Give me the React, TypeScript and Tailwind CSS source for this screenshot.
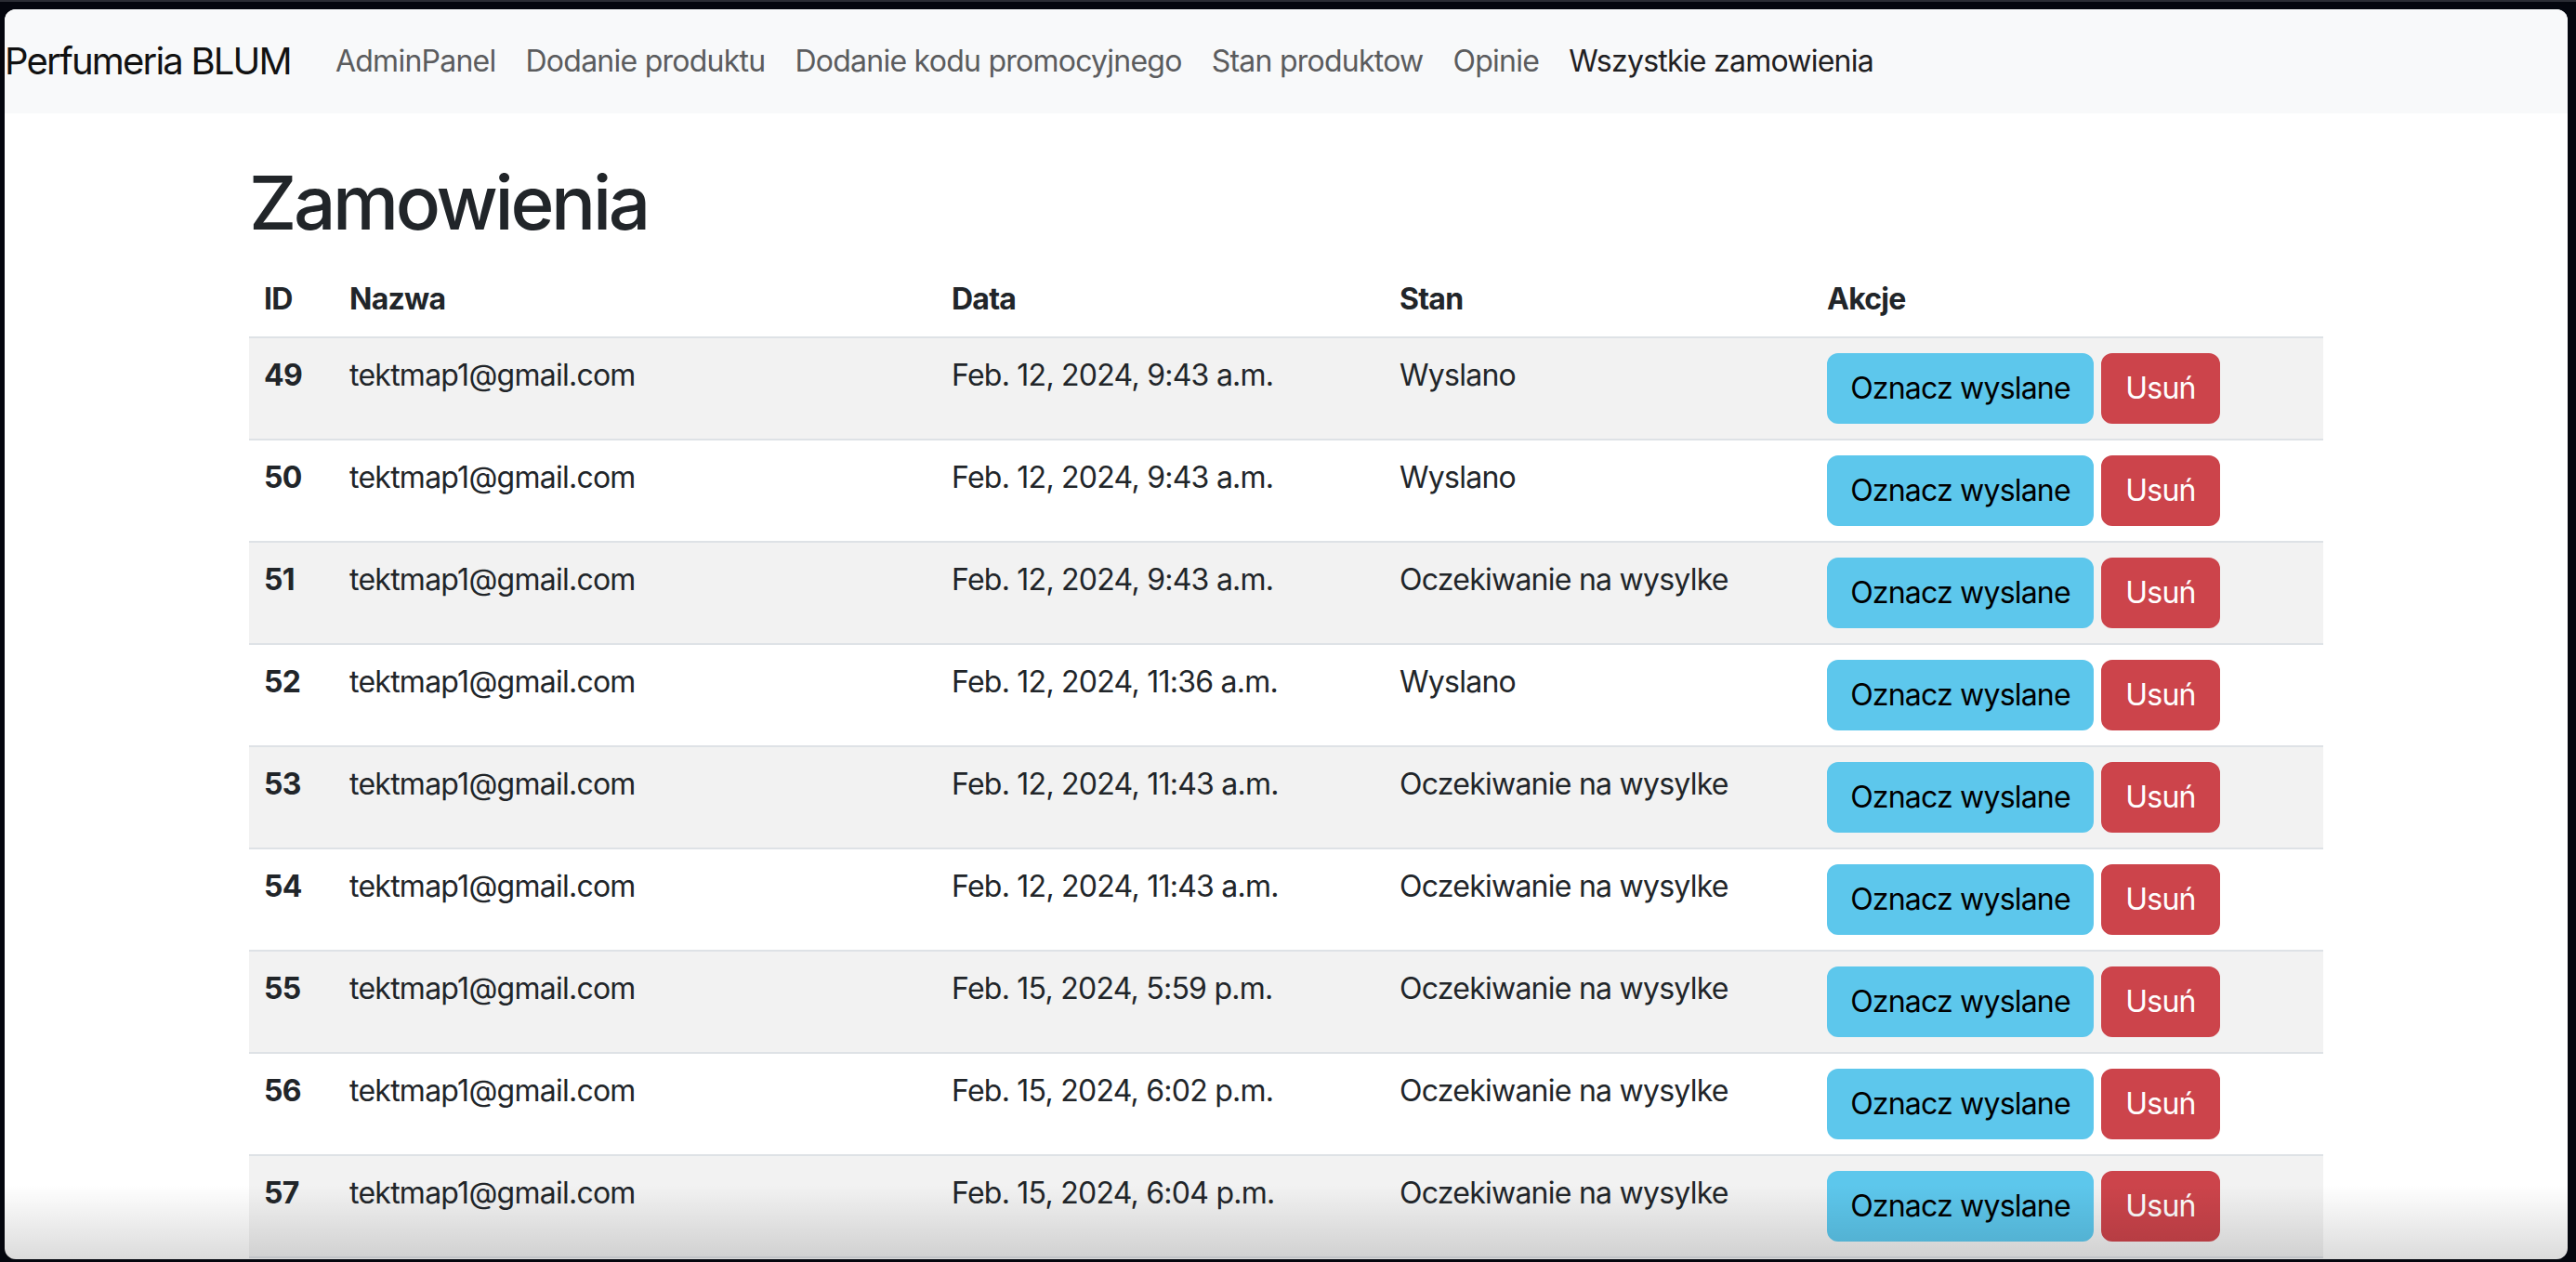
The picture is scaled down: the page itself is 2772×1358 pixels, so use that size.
import React from "react"

const links = [
  { label: "AdminPanel", active: false },
  { label: "Dodanie produktu", active: false },
  { label: "Dodanie kodu promocyjnego", active: false },
  { label: "Stan produktow", active: false },
  { label: "Opinie", active: false },
  { label: "Wszystkie zamowienia", active: true },
]

const orders = [
  { id: 49, date: "Feb. 12, 2024, 9:43 a.m.", status: "Wyslano" },
  { id: 50, date: "Feb. 12, 2024, 9:43 a.m.", status: "Wyslano" },
  { id: 51, date: "Feb. 12, 2024, 9:43 a.m.", status: "Oczekiwanie na wysylke" },
  { id: 52, date: "Feb. 12, 2024, 11:36 a.m.", status: "Wyslano" },
  { id: 53, date: "Feb. 12, 2024, 11:43 a.m.", status: "Oczekiwanie na wysylke" },
  { id: 54, date: "Feb. 12, 2024, 11:43 a.m.", status: "Oczekiwanie na wysylke" },
  { id: 55, date: "Feb. 15, 2024, 5:59 p.m.", status: "Oczekiwanie na wysylke" },
  { id: 56, date: "Feb. 15, 2024, 6:02 p.m.", status: "Oczekiwanie na wysylke" },
  { id: 57, date: "Feb. 15, 2024, 6:04 p.m.", status: "Oczekiwanie na wysylke" },
]

export default function App() {
  return (
    <div className="w-[2772px] h-[1358px] bg-[#04060e] overflow-hidden flex flex-col font-['Inter','Liberation_Sans',sans-serif] text-[#212529]">
      <div className="h-[2px] bg-[#2a2c34] shrink-0" />
      <div className="flex-1 pt-[8px] pl-[5px] pr-[9px] pb-[3px] flex">
        {/* browser window */}
        <div className="relative flex-1 bg-white rounded-[12px] overflow-hidden">
          <nav className="h-[112px] bg-[#f8f9fa] flex items-center">
            <a className="text-[40px] leading-[60px] text-[#111] mr-[32px] tracking-[-1.8px]">Perfumeria BLUM</a>
            <ul className="flex">
              {links.map((l) => (
                <li key={l.label}>
                  <a
                    className={`block px-[16px] py-[16px] text-[32px] leading-[48px] tracking-[-0.75px] ${
                      l.active ? "text-[#1f2022]" : "text-[#5b5c5e]"
                    }`}
                  >
                    {l.label}
                  </a>
                </li>
              ))}
            </ul>
          </nav>

          <div className="w-[2280px] mx-auto px-[24px] mt-[48px]">
            <h1 className="text-[80px] leading-[96px] font-medium mb-[16px] tracking-[-3.3px]">Zamowienia</h1>
            <table className="w-full table-fixed border-collapse text-[32px] leading-[48px] tracking-[-0.75px]">
              <colgroup>
                <col className="w-[92px]" />
                <col className="w-[648px]" />
                <col className="w-[482px]" />
                <col className="w-[460px]" />
                <col className="w-[550px]" />
              </colgroup>
              <thead>
                <tr className="border-b-[2px] border-[#dee2e6]">
                  {["ID", "Nazwa", "Data", "Stan", "Akcje"].map((h) => (
                    <th key={h} className="text-left font-bold p-[16px] align-bottom">
                      {h}
                    </th>
                  ))}
                </tr>
              </thead>
              <tbody>
                {orders.map((o, i) => (
                  <tr key={o.id} className={`border-b-[2px] border-[#dee2e6] ${i % 2 === 0 ? "bg-[#f2f2f2]" : "bg-white"}`}>
                    <th className="text-left font-bold p-[16px] align-top">{o.id}</th>
                    <td className="p-[16px] align-top">tektmap1@gmail.com</td>
                    <td className="p-[16px] align-top">{o.date}</td>
                    <td className="p-[16px] align-top">{o.status}</td>
                    <td className="p-[16px] align-top">
                      <div className="flex gap-[8px]">
                        <button className="h-[76px] w-[287px] rounded-[12px] border-[2px] border-[#5dc7ec] bg-[#5dc7ec] text-black text-[32px] leading-[48px] tracking-[-0.8px]">
                          Oznacz wyslane
                        </button>
                        <button className="h-[76px] w-[128px] rounded-[12px] border-[2px] border-[#cc444b] bg-[#cc444b] text-white text-[32px] leading-[48px] tracking-[-0.8px]">
                          Usuń
                        </button>
                      </div>
                    </td>
                  </tr>
                ))}
              </tbody>
            </table>
          </div>

          {/* bottom shadow over the page */}
          <div className="absolute left-0 right-0 bottom-0 h-[80px] bg-gradient-to-b from-transparent to-black/[0.14] pointer-events-none" />
        </div>
      </div>
    </div>
  )
}
